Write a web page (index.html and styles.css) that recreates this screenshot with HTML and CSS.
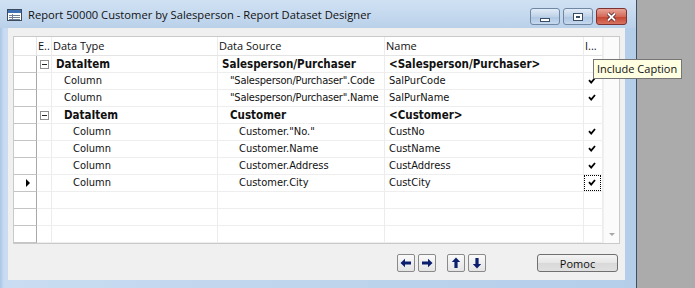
FILE: index.html
```html
<!DOCTYPE html>
<html>
   <head>
      <meta charset="UTF-8">
      <title>Report Dataset Designer</title>
      <link rel="stylesheet" href="styles.css">
   </head>
   <body>
      <div class="desktop">
         <div class="window">
            <div class="titlebar">
               <svg class="app-icon" width="15" height="12" viewBox="0 0 15 12">
                  <rect x="0.5" y="0.5" width="14" height="11" fill="#fff" stroke="#3b4a5c"/>
                  <rect x="1" y="1" width="13" height="3" fill="#3c6fb4"/>
                  <path d="M2 6.5h11M2 8.5h11M2 10.5h11M5.5 5v6" stroke="#6d7f96" stroke-width="1"/>
               </svg>
               <span class="title">Report 50000 Customer by Salesperson - Report Dataset Designer</span>
               <div class="caption-buttons">
                  <span class="cap-btn cap-min"><i></i></span>
                  <span class="cap-btn cap-max"><i></i></span>
                  <span class="cap-btn cap-close">
                     <svg width="13" height="10" viewBox="0 0 13 10">
                        <path d="M3 1.5l7 7M10 1.5l-7 7" stroke="#4a2020" stroke-width="3.4"/>
                        <path d="M3 1.5l7 7M10 1.5l-7 7" stroke="#fff" stroke-width="1.8"/>
                     </svg>
                  </span>
               </div>
            </div>

            <div class="client">
               <div class="grid">
                  <div class="grid-body">
                     <div class="row head">
                        <div class="rh"></div>
                        <div class="cell">E..</div>
                        <div class="cell">Data Type</div>
                        <div class="cell">Data Source</div>
                        <div class="cell">Name</div>
                        <div class="cell">I...</div>
                     </div>

                     <div class="row">
                        <div class="rh"></div>
                        <div class="cell exp"><span class="tree-box"></span></div>
                        <div class="cell ind-a bold">DataItem</div>
                        <div class="cell ind-a bold">Salesperson/Purchaser</div>
                        <div class="cell name bold">&lt;Salesperson/Purchaser&gt;</div>
                        <div class="cell chk"></div>
                     </div>
                     <div class="row">
                        <div class="rh"></div>
                        <div class="cell exp"></div>
                        <div class="cell ind-b">Column</div>
                        <div class="cell ind-b tight">"Salesperson/Purchaser".Code</div>
                        <div class="cell name">SalPurCode</div>
                        <div class="cell chk"><span class="tick"></span></div>
                     </div>
                     <div class="row">
                        <div class="rh"></div>
                        <div class="cell exp"></div>
                        <div class="cell ind-b">Column</div>
                        <div class="cell ind-b tight">"Salesperson/Purchaser".Name</div>
                        <div class="cell name">SalPurName</div>
                        <div class="cell chk"><span class="tick"></span></div>
                     </div>
                     <div class="row">
                        <div class="rh"></div>
                        <div class="cell exp"><span class="tree-box"></span></div>
                        <div class="cell ind-b bold">DataItem</div>
                        <div class="cell ind-b bold">Customer</div>
                        <div class="cell name bold">&lt;Customer&gt;</div>
                        <div class="cell chk"></div>
                     </div>
                     <div class="row">
                        <div class="rh"></div>
                        <div class="cell exp"></div>
                        <div class="cell ind-c">Column</div>
                        <div class="cell ind-c">Customer."No."</div>
                        <div class="cell name">CustNo</div>
                        <div class="cell chk"><span class="tick"></span></div>
                     </div>
                     <div class="row">
                        <div class="rh"></div>
                        <div class="cell exp"></div>
                        <div class="cell ind-c">Column</div>
                        <div class="cell ind-c">Customer.Name</div>
                        <div class="cell name">CustName</div>
                        <div class="cell chk"><span class="tick"></span></div>
                     </div>
                     <div class="row">
                        <div class="rh"></div>
                        <div class="cell exp"></div>
                        <div class="cell ind-c">Column</div>
                        <div class="cell ind-c">Customer.Address</div>
                        <div class="cell name">CustAddress</div>
                        <div class="cell chk"><span class="tick"></span></div>
                     </div>
                     <div class="row">
                        <div class="rh current"></div>
                        <div class="cell exp"></div>
                        <div class="cell ind-c">Column</div>
                        <div class="cell ind-c">Customer.City</div>
                        <div class="cell name">CustCity</div>
                        <div class="cell chk"><span class="focus"><span class="tick"></span></span></div>
                     </div>
                     <div class="row empty">
                        <div class="rh"></div><div class="cell exp"></div><div class="cell"></div><div class="cell"></div><div class="cell"></div><div class="cell chk"></div>
                     </div>
                     <div class="row empty">
                        <div class="rh"></div><div class="cell exp"></div><div class="cell"></div><div class="cell"></div><div class="cell"></div><div class="cell chk"></div>
                     </div>
                     <div class="row empty">
                        <div class="rh"></div><div class="cell exp"></div><div class="cell"></div><div class="cell"></div><div class="cell"></div><div class="cell chk"></div>
                     </div>
                  </div>
                  <div class="vscroll">
                     <span class="sb-arrow"></span>
                  </div>
               </div>

               <div class="footer">
                  <div class="nav-pair">
                     <span class="nav-btn"><svg width="12" height="10" viewBox="0 0 12 10"><path d="M0.5 5L5 0.8V3.4H11V6.6H5V9.2Z" fill="#0b1f6e"/></svg></span>
                     <span class="nav-btn"><svg width="12" height="10" viewBox="0 0 12 10"><path d="M11.5 5L7 0.8V3.4H1V6.6H7V9.2Z" fill="#0b1f6e"/></svg></span>
                  </div>
                  <div class="nav-pair">
                     <span class="nav-btn"><svg width="10" height="12" viewBox="0 0 10 12"><path d="M5 0.5L9.2 5H6.6V11H3.4V5H0.8Z" fill="#0b1f6e"/></svg></span>
                     <span class="nav-btn"><svg width="10" height="12" viewBox="0 0 10 12"><path d="M5 11.5L9.2 7H6.6V1H3.4V7H0.8Z" fill="#0b1f6e"/></svg></span>
                  </div>
                  <button class="help-btn">Pomoc</button>
               </div>
            </div>
         </div>
         <div class="tooltip">Include Caption</div>
      </div>
   </body>
</html>
```

FILE: styles.css
```css
*
{
   box-sizing: border-box;
}

body
{
   margin: 0;
   background: #ababab;
   font-family: "Open Sans", "Noto Sans", sans-serif;
   font-size: 11px;
   color: #000;
}

.desktop
{
   position: relative;
   width: 695px;
   height: 288px;
   overflow: hidden;
}

.window
{
   display: flex;
   flex-direction: column;
   width: 637px;
   height: 288px;
   background: linear-gradient(to right, #a9c6e7 0, #c9dcf1 4px, #bcd3ec 60%, #b4cde9 100%);
   border-right: 1px solid #3f4f61;
}

/* title bar */

.titlebar
{
   display: flex;
   align-items: center;
   height: 28px;
   padding: 0 9px 0 7px;
   background: linear-gradient(to bottom, #d0e1f3, #bad1ea);
}

.app-icon
{
   margin: 2px 6px 0 0;
}

.title
{
   flex: 1;
   font-size: 11.2px;
   color: #111;
   white-space: nowrap;
   margin-top: 1px;
}

.caption-buttons
{
   display: flex;
   gap: 3px;
   align-self: flex-start;
   margin-top: 8px;
}

.cap-btn
{
   display: flex;
   align-items: center;
   justify-content: center;
   width: 30px;
   height: 17px;
   border: 1px solid #6f87a3;
   border-radius: 3px;
   background: linear-gradient(to bottom, #e2ecf7, #bfd2e8 50%, #aec6e2 51%, #c5d8ee);
}

.cap-min i
{
   width: 10px;
   height: 4px;
   margin-top: 6px;
   background: #fff;
   border: 1px solid #3a4d66;
}

.cap-max i
{
   width: 10px;
   height: 8px;
   background: #fff;
   border: 1px solid #3a4d66;
   box-shadow: inset 0 0 0 2px #fff, inset 0 0 0 3px #3a4d66;
}

.cap-close
{
   width: 31px;
   border-color: #7e3232;
   background: linear-gradient(to bottom, #e8a597, #d46a5a 50%, #c4432f 51%, #d8735f);
}

/* client area */

.client
{
   flex: 1;
   display: flex;
   flex-direction: column;
   margin: 0 11px 8px 8px;
   padding: 8px 5px 0 5px;
   background: #f0f0f0;
}

.grid
{
   display: flex;
   height: 208px;
   background: #fff;
   border: 1px solid #c9c9c9;
   border-right: none;
}

.grid-body
{
   width: 589px;
}

.row
{
   display: grid;
   grid-template-columns: 23px 15px 166px 167px 199px 19px;
   height: 17px;
   font-family: "DejaVu Sans Condensed", "Liberation Sans", sans-serif;
   font-size: 11px;
   line-height: 16px;
}

.row.head
{
   height: 19px;
   font-family: "Open Sans", "Noto Sans", sans-serif;
   font-size: 11px;
   line-height: 18px;
   color: #1a1a1a;
}

.rh
{
   border-right: 1px solid #a9a9a9;
   border-bottom: 1px solid #c4c4c4;
   background: #fff;
}

.row.head .rh
{
   border-bottom-color: #e4e4e4;
   border-right-color: #e4e4e4;
}

.rh.current
{
   position: relative;
}

.rh.current::after
{
   content: "";
   position: absolute;
   left: 12px;
   top: 4px;
   border-left: 4px solid #000;
   border-top: 4px solid transparent;
   border-bottom: 4px solid transparent;
}

.cell
{
   padding-left: 2px;
   white-space: nowrap;
   overflow: hidden;
   border-right: 1px solid #ececec;
   border-bottom: 1px solid #eeeeee;
   color: #111;
}

.row.head .cell
{
   padding-left: 1px;
   border-bottom-color: #e4e4e4;
}

.bold
{
   font-weight: bold;
   font-size: 11.5px;
}

.tight
{
   letter-spacing: -0.2px;
}

.ind-a
{
   padding-left: 4px;
}

.ind-b
{
   padding-left: 12px;
}

.ind-c
{
   padding-left: 21px;
}

.name
{
   padding-left: 4px;
}

.exp
{
   padding: 4px 0 0 3px;
}

.tree-box
{
   display: block;
   position: relative;
   width: 9px;
   height: 9px;
   border: 1px solid #8f8f8f;
   background: #fff;
}

.tree-box::after
{
   content: "";
   position: absolute;
   left: 1px;
   top: 3px;
   width: 5px;
   height: 1px;
   background: #222;
}

.chk
{
   padding: 0;
}

.tick
{
   display: block;
   width: 8px;
   height: 7px;
   margin: 4px 0 0 4px;
   background: url("data:image/svg+xml,%3Csvg xmlns='http://www.w3.org/2000/svg' width='8' height='7'%3E%3Cpath d='M1 3.2L3.2 5.6L7 1' stroke='%23000' stroke-width='1.8' fill='none'/%3E%3C/svg%3E") no-repeat;
}

.focus
{
   display: block;
   width: 17px;
   height: 16px;
   border: 1px dotted #000;
}

.focus .tick
{
   margin: 3px 0 0 3px;
}

.vscroll
{
   position: relative;
   width: 17px;
   background: #fbfbfb;
   border-left: 1px solid #f0f0f0;
   border-right: 1px solid #c9c9c9;
}

.sb-arrow
{
   position: absolute;
   left: 5px;
   bottom: 7px;
   border-top: 3px solid #a8a8a8;
   border-left: 3px solid transparent;
   border-right: 3px solid transparent;
}

/* footer buttons */

.footer
{
   display: flex;
   align-items: flex-start;
   padding: 10px 0 0 384px;
}

.nav-pair
{
   display: flex;
   gap: 3px;
   margin-right: 11px;
}

.nav-btn
{
   display: flex;
   align-items: center;
   justify-content: center;
   width: 18px;
   height: 18px;
   border: 1px solid #8a8a8a;
   border-radius: 2px;
   background: linear-gradient(to bottom, #fafafa, #e4e4e4);
}

.help-btn
{
   width: 81px;
   height: 18px;
   margin-left: 40px;
   padding: 0;
   border: 1px solid #707070;
   border-radius: 3px;
   background: linear-gradient(to bottom, #f4f4f4, #e6e6e6 50%, #d9d9d9 51%, #e0e0e0);
   font-family: "Open Sans", "Noto Sans", sans-serif;
   font-size: 11px;
   line-height: 15px;
   color: #111;
}

/* tooltip */

.tooltip
{
   position: absolute;
   left: 593px;
   top: 59px;
   width: 89px;
   height: 20px;
   padding: 0 0 0 3px;
   border: 1px solid #767676;
   background: #ffffe1;
   font-size: 11px;
   line-height: 18px;
   white-space: nowrap;
   color: #111;
}
```
